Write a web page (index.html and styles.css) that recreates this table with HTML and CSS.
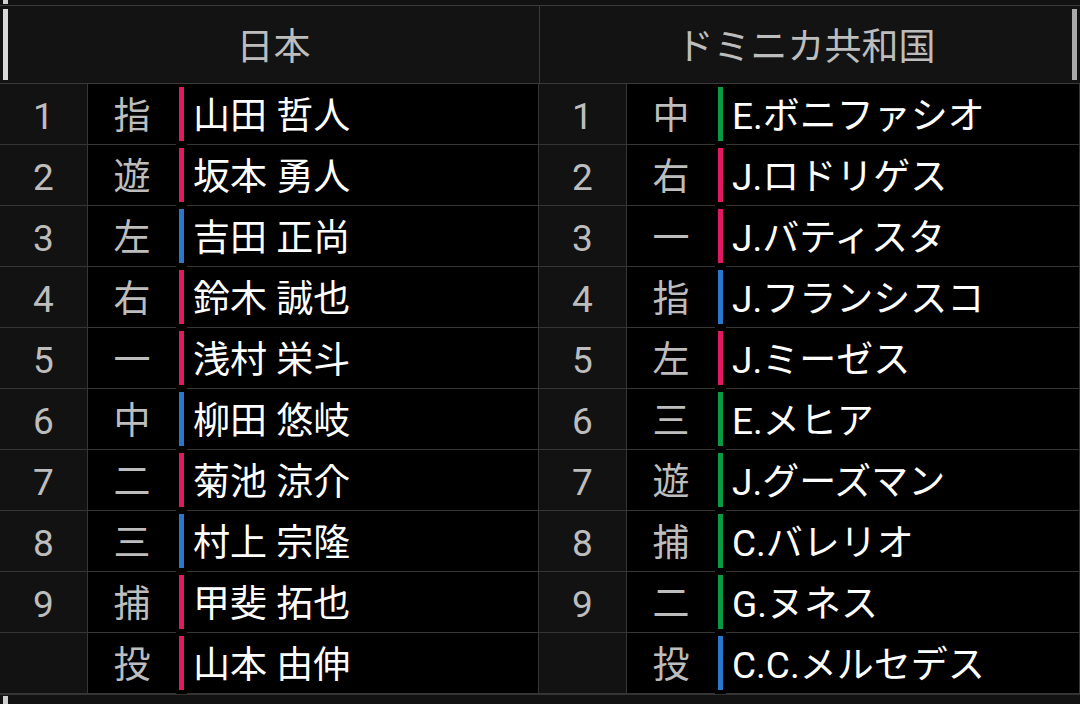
FILE: index.html
```html
<!DOCTYPE html>
<html lang="ja">
<head>
<meta charset="utf-8">
<title>スタメン</title>
<link rel="stylesheet" href="styles.css">
</head>
<body>
<div class="strip strip-top"><span class="strip-bar"></span></div>
<div class="head">
  <div class="head-cell head-left"><span class="head-bar bar-light"></span><span class="head-label">日本</span></div>
  <div class="head-cell head-right"><span class="head-label">ドミニカ共和国</span><span class="head-bar bar-mid"></span></div>
</div>
<div class="rows">
  <div class="row">
    <div class="num">1</div><div class="pos">指</div><div class="mark"><span class="bar pink"></span></div><div class="name">山田 哲人</div>
    <div class="num">1</div><div class="pos">中</div><div class="mark"><span class="bar green"></span></div><div class="name">E.ボニファシオ</div>
  </div>
  <div class="row">
    <div class="num">2</div><div class="pos">遊</div><div class="mark"><span class="bar pink"></span></div><div class="name">坂本 勇人</div>
    <div class="num">2</div><div class="pos">右</div><div class="mark"><span class="bar pink"></span></div><div class="name">J.ロドリゲス</div>
  </div>
  <div class="row">
    <div class="num">3</div><div class="pos">左</div><div class="mark"><span class="bar blue"></span></div><div class="name">吉田 正尚</div>
    <div class="num">3</div><div class="pos">一</div><div class="mark"><span class="bar pink"></span></div><div class="name">J.バティスタ</div>
  </div>
  <div class="row">
    <div class="num">4</div><div class="pos">右</div><div class="mark"><span class="bar pink"></span></div><div class="name">鈴木 誠也</div>
    <div class="num">4</div><div class="pos">指</div><div class="mark"><span class="bar blue"></span></div><div class="name">J.フランシスコ</div>
  </div>
  <div class="row">
    <div class="num">5</div><div class="pos">一</div><div class="mark"><span class="bar pink"></span></div><div class="name">浅村 栄斗</div>
    <div class="num">5</div><div class="pos">左</div><div class="mark"><span class="bar pink"></span></div><div class="name">J.ミーゼス</div>
  </div>
  <div class="row">
    <div class="num">6</div><div class="pos">中</div><div class="mark"><span class="bar blue"></span></div><div class="name">柳田 悠岐</div>
    <div class="num">6</div><div class="pos">三</div><div class="mark"><span class="bar green"></span></div><div class="name">E.メヒア</div>
  </div>
  <div class="row">
    <div class="num">7</div><div class="pos">二</div><div class="mark"><span class="bar pink"></span></div><div class="name">菊池 涼介</div>
    <div class="num">7</div><div class="pos">遊</div><div class="mark"><span class="bar green"></span></div><div class="name">J.グーズマン</div>
  </div>
  <div class="row">
    <div class="num">8</div><div class="pos">三</div><div class="mark"><span class="bar blue"></span></div><div class="name">村上 宗隆</div>
    <div class="num">8</div><div class="pos">捕</div><div class="mark"><span class="bar green"></span></div><div class="name">C.バレリオ</div>
  </div>
  <div class="row">
    <div class="num">9</div><div class="pos">捕</div><div class="mark"><span class="bar pink"></span></div><div class="name">甲斐 拓也</div>
    <div class="num">9</div><div class="pos">二</div><div class="mark"><span class="bar green"></span></div><div class="name">G.ヌネス</div>
  </div>
  <div class="row">
    <div class="num"></div><div class="pos">投</div><div class="mark"><span class="bar pink"></span></div><div class="name">山本 由伸</div>
    <div class="num"></div><div class="pos">投</div><div class="mark"><span class="bar blue"></span></div><div class="name">C.C.メルセデス</div>
  </div>
</div>
<div class="strip strip-bottom"><span class="strip-bar"></span></div>
</body>
</html>
```

FILE: styles.css
```css
html, body {
  margin: 0;
  padding: 0;
  background: #121212;
}
body {
  width: 1080px;
  height: 704px;
  overflow: hidden;
  font-family: Roboto, "Noto Sans CJK JP", sans-serif;
  font-size: 37px;
  color: #bdbdbd;
}

.strip {
  display: flex;
  background: #121212;
  padding-left: 3px;
}
.strip-top {
  height: 5px;
  border-bottom: 1px solid #3a3a3a;
  align-items: flex-start;
}
.strip-top .strip-bar {
  width: 5px;
  height: 4px;
  background: #cfcfcf;
}
.strip-bottom {
  height: 10px;
  border-top: 1px solid #333;
  padding-top: 1px;
}
.strip-bottom .strip-bar {
  width: 5px;
  height: 10px;
  background: #cfcfcf;
}

.head {
  display: flex;
  height: 77px;
  border-bottom: 1px solid #3a3a3a;
  background: #131313;
}
.head-cell {
  display: flex;
  align-items: stretch;
  padding: 3px 0;
}
.head-left {
  width: 536px;
  padding-left: 3px;
  border-right: 1px solid #3a3a3a;
}
.head-right {
  flex: 1;
  padding-right: 3px;
}
.head-bar {
  width: 5px;
  flex: none;
}
.bar-light { background: #d9d9d9; }
.bar-mid { background: #a9a9a9; }
.head-label {
  flex: 1;
  display: flex;
  align-items: center;
  justify-content: center;
  color: #bdbdbd;
  padding-bottom: 2px;
}

.row {
  display: grid;
  grid-template-columns: 88px 88px 11px 352px 88px 88px 11px 354px;
  height: 61px;
}
.num, .pos, .name {
  display: flex;
  align-items: center;
  border-bottom: 1px solid #363636;
  box-sizing: border-box;
  padding-bottom: 2px;
}
.num {
  justify-content: center;
  background: #121212;
  border-right: 1px solid #363636;
  color: #bdbdbd;
  padding-top: 5px;
  padding-bottom: 0;
}
.pos {
  justify-content: center;
  background: #000;
  color: #bdbdbd;
}
.name {
  background: #000;
  color: #ffffff;
  padding-left: 6px;
  border-right: 1px solid #363636;
  white-space: nowrap;
}
.mark {
  background: #000;
  display: flex;
  padding: 3px 3px 4px 3px;
  box-sizing: border-box;
}
.bar {
  width: 5px;
  flex: none;
}
.pink { background: #e01a62; }
.blue { background: #2a78cc; }
.green { background: #0a9a44; }
```
